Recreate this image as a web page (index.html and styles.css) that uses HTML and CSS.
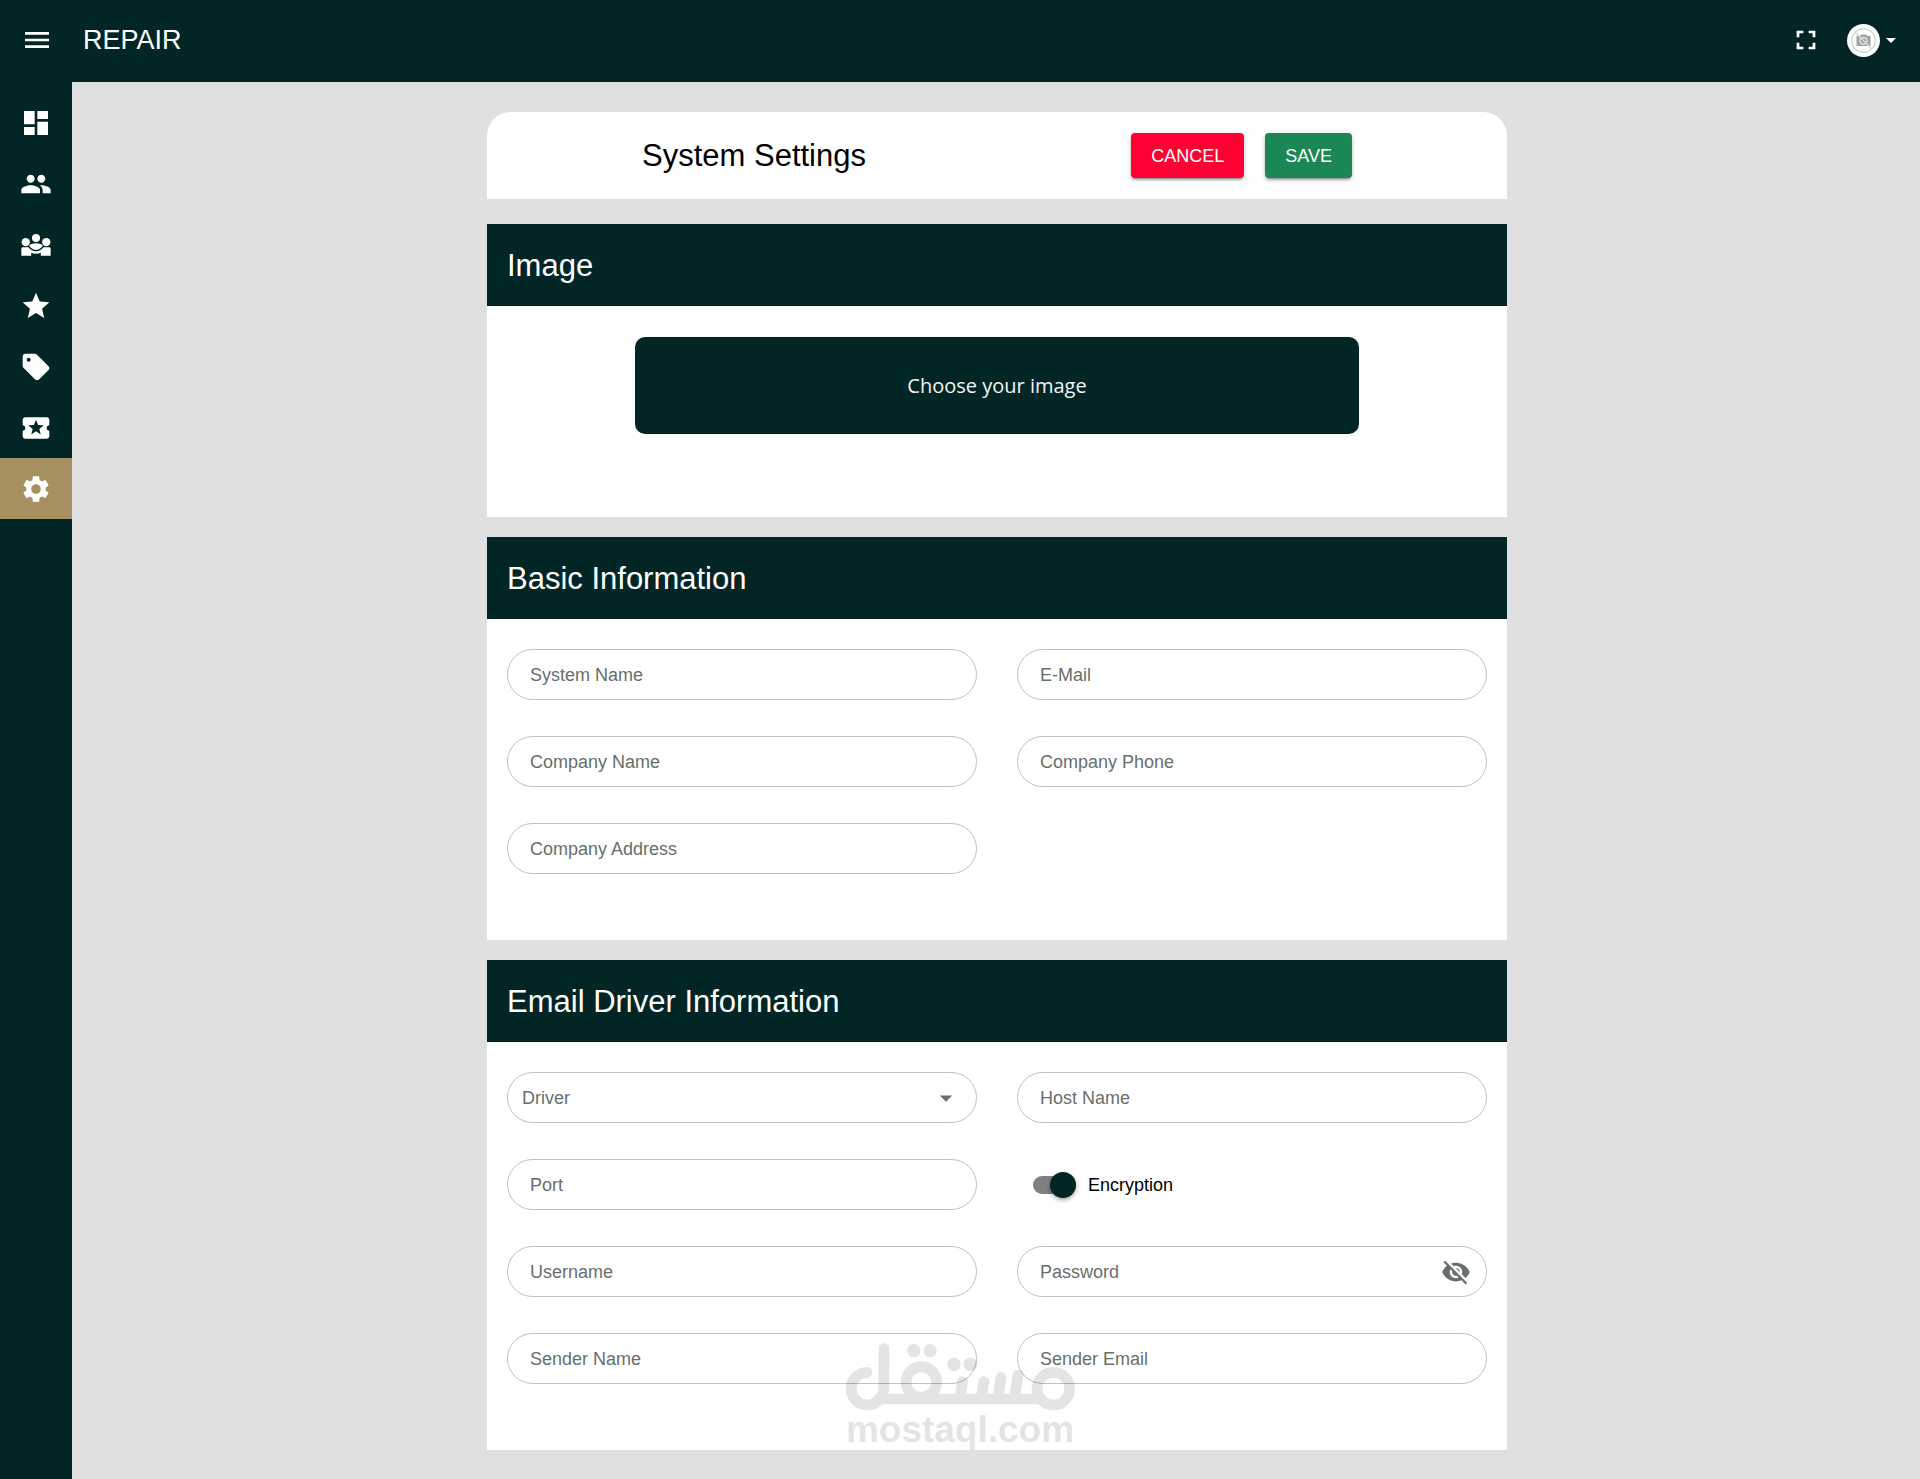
FILE: index.html
```html
<!DOCTYPE html>
<html lang="en">
<head>
<meta charset="utf-8">
<meta name="viewport" content="width=device-width, initial-scale=1">
<title>Repair - System Settings</title>
<link rel="stylesheet" href="styles.css">
</head>
<body>
<div class="app">
  <header class="topbar">
    <button class="icon-button" type="button" aria-label="Toggle menu">
      <svg class="icon" viewBox="0 0 24 24"><path d="M3 18h18v-2H3v2zm0-5h18v-2H3v2zm0-7v2h18V6H3z"/></svg>
    </button>
    <a class="brand" href="#">REPAIR</a>
    <button class="icon-button fullscreen" type="button" aria-label="Full screen">
      <svg class="icon" viewBox="0 0 24 24"><path d="M7 14H5v5h5v-2H7v-3zm-2-4h2V7h3V5H5v5zm12 7h-3v2h5v-5h-2v3zM14 5v2h3v3h2V5h-5z"/></svg>
    </button>
    <button class="account" type="button" aria-label="Account menu">
      <svg class="avatar" viewBox="0 0 33 33">
        <circle cx="16.500" cy="16.500" r="16.500" fill="#fff"/>
        <path d="M9.500 12h3.500l1.500-1.500h4.500L20.500 12h3v10h-14z" fill="#9da3a3"/>
        <circle cx="16.500" cy="16.800" r="3.400" fill="none" stroke="#dcdfdf" stroke-width="1.500"/>
        <circle cx="16.500" cy="16.500" r="11.800" fill="none" stroke="#d5d8d8" stroke-width="1.400"/>
        <path d="M8.500 8.500l16 16" stroke="#d5d8d8" stroke-width="1.600"/>
      </svg>
      <svg class="caret" viewBox="0 0 10 5"><path d="M0 0h10L5 5z"/></svg>
    </button>
  </header>

  <div class="layout">
    <nav class="sidebar" aria-label="Main">
      <a class="nav-item" href="#" aria-label="Dashboard"><svg class="icon" viewBox="0 0 24 24"><path d="M3 13h8V3H3v10zm0 8h8v-6H3v6zm10 0h8V11h-8v10zm0-18v6h8V3h-8z"/></svg></a>
      <a class="nav-item" href="#" aria-label="Users"><svg class="icon" viewBox="0 0 24 24"><path d="M16 11c1.660 0 2.990-1.340 2.990-3S17.660 5 16 5c-1.660 0-3 1.340-3 3s1.340 3 3 3zm-8 0c1.660 0 2.990-1.340 2.990-3S9.660 5 8 5C6.340 5 5 6.340 5 8s1.340 3 3 3zm0 2c-2.330 0-7 1.170-7 3.500V19h14v-2.500c0-2.330-4.670-3.500-7-3.500zm8 0c-.29 0-.62.02-.97.05 1.160.84 1.970 1.970 1.970 3.450V19h6v-2.500c0-2.330-4.670-3.500-7-3.500z"/></svg></a>
      <a class="nav-item" href="#" aria-label="Teams"><svg class="icon" viewBox="0 0 24 24"><circle cx="12" cy="6.800" r="3"/><circle cx="4.300" cy="9.900" r="3.100"/><circle cx="19.700" cy="9.900" r="3.100"/><path d="M6.800 12.200C8 11.100 10 10.600 12 10.600s4 .5 5.200 1.600c-.8 2-2.800 3.500-5.200 3.500s-4.400-1.500-5.200-3.500zM1 20v-5.200c0-.7.500-1.200 1.200-1.200h4.200c1 1.700 3.100 3 5.600 3s4.600-1.300 5.600-3h4.200c.7 0 1.200.5 1.200 1.200V20h-7.400v-2.100c-1.100.5-2.300.7-3.600.7s-2.500-.2-3.600-.7V20z"/></svg></a>
      <a class="nav-item" href="#" aria-label="Favourites"><svg class="icon" viewBox="0 0 24 24"><path d="M12 17.270L18.180 21l-1.640-7.030L22 9.240l-7.190-.61L12 2 9.190 8.630 2 9.240l5.460 4.730L5.820 21z"/></svg></a>
      <a class="nav-item" href="#" aria-label="Tags"><svg class="icon" viewBox="0 0 24 24"><path d="m21.410 11.410-8.830-8.830c-.37-.37-.88-.58-1.410-.58H4c-1.100 0-2 .9-2 2v7.170c0 .53.21 1.040.59 1.410l8.830 8.830c.78.78 2.050.78 2.830 0l7.170-7.170c.78-.78.78-2.040-.01-2.830zM6.500 8C5.670 8 5 7.330 5 6.500S5.670 5 6.500 5 8 5.670 8 6.500 7.330 8 6.500 8z"/></svg></a>
      <a class="nav-item" href="#" aria-label="Coupons"><svg class="icon" viewBox="0 0 24 24"><path d="M20 12c0-1.100.9-2 2-2V6c0-1.100-.9-2-2-2H4c-1.100 0-1.990.9-1.990 2v4c1.100 0 1.990.9 1.990 2s-.89 2-2 2v4c0 1.100.9 2 2 2h16c1.100 0 2-.9 2-2v-4c-1.100 0-2-.9-2-2zm-4.420 4.800L12 14.500l-3.580 2.300 1.080-4.120-3.290-2.690 4.240-.25L12 5.800l1.540 3.950 4.240.25-3.290 2.690 1.090 4.110z"/></svg></a>
      <a class="nav-item active" href="#" aria-label="Settings" aria-current="page"><svg class="icon" viewBox="0 0 24 24"><path d="M19.140 12.940c.04-.3.06-.61.06-.94 0-.32-.02-.64-.07-.94l2.030-1.580c.18-.14.23-.41.12-.61l-1.920-3.320c-.12-.22-.37-.29-.59-.22l-2.390.96c-.5-.38-1.030-.7-1.620-.94l-.36-2.540c-.04-.24-.24-.41-.48-.41h-3.840c-.24 0-.43.17-.47.41l-.36 2.540c-.59.24-1.130.57-1.620.94l-2.390-.96c-.22-.08-.47 0-.59.22L2.740 8.870c-.12.21-.08.47.12.61l2.030 1.580c-.05.3-.09.63-.09.94s.02.64.07.94l-2.030 1.580c-.18.14-.23.41-.12.61l1.920 3.320c.12.22.37.29.59.22l2.390-.96c.5.38 1.030.7 1.620.94l.36 2.540c.05.24.24.41.48.41h3.840c.24 0 .44-.17.47-.41l.36-2.540c.59-.24 1.130-.56 1.620-.94l2.390.96c.22.08.47 0 .59-.22l1.920-3.320c.12-.22.07-.47-.12-.61l-2.010-1.580zM12 15.600c-1.980 0-3.600-1.620-3.600-3.600s1.620-3.600 3.600-3.600 3.600 1.620 3.600 3.600-1.620 3.600-3.600 3.600z"/></svg></a>
    </nav>

    <main class="content">
      <form class="settings">
        <div class="title-card">
          <h1 class="title">System Settings</h1>
          <button class="btn btn-cancel" type="button">CANCEL</button>
          <button class="btn btn-save" type="submit">SAVE</button>
        </div>

        <section class="panel">
          <h2 class="panel-title">Image</h2>
          <div class="panel-body upload-body">
            <button class="upload" type="button">Choose your image</button>
          </div>
        </section>

        <section class="panel">
          <h2 class="panel-title">Basic Information</h2>
          <div class="panel-body fields">
            <div class="field"><input id="system-name" type="text"><label for="system-name">System Name</label></div>
            <div class="field"><input id="email" type="email"><label for="email">E-Mail</label></div>
            <div class="field"><input id="company-name" type="text"><label for="company-name">Company Name</label></div>
            <div class="field"><input id="company-phone" type="tel"><label for="company-phone">Company Phone</label></div>
            <div class="field"><input id="company-address" type="text"><label for="company-address">Company Address</label></div>
          </div>
        </section>

        <section class="panel">
          <h2 class="panel-title">Email Driver Information</h2>
          <div class="panel-body fields">
            <div class="field field-select">
              <select id="driver"><option value=""></option></select>
              <label for="driver">Driver</label>
              <svg class="field-icon" viewBox="0 0 24 24"><path d="M7 10l5 5 5-5z"/></svg>
            </div>
            <div class="field"><input id="host" type="text"><label for="host">Host Name</label></div>
            <div class="field"><input id="port" type="text"><label for="port">Port</label></div>
            <div class="switch-row">
              <input class="switch" id="encryption" type="checkbox" role="switch" checked>
              <label for="encryption">Encryption</label>
            </div>
            <div class="field"><input id="username" type="text"><label for="username">Username</label></div>
            <div class="field">
              <input id="password" type="password"><label for="password">Password</label>
              <button class="reveal" type="button" aria-label="Show password">
                <svg class="eye" viewBox="0 0 24 24"><path d="M12 7c2.760 0 5 2.240 5 5 0 .65-.13 1.260-.36 1.830l2.920 2.920c1.510-1.260 2.700-2.890 3.430-4.750-1.730-4.390-6-7.500-11-7.500-1.400 0-2.740.25-3.980.7l2.160 2.160C10.740 7.130 11.350 7 12 7zM2 4.270l2.280 2.280.46.46C3.080 8.300 1.780 10.020 1 12c1.730 4.390 6 7.500 11 7.500 1.550 0 3.030-.3 4.380-.84l.42.42L19.730 22 21 20.730 3.270 3 2 4.270zM7.530 9.800l1.550 1.550c-.05.21-.08.43-.08.65 0 1.660 1.340 3 3 3 .22 0 .44-.03.65-.08l1.550 1.550c-.67.33-1.410.53-2.200.53-2.760 0-5-2.240-5-5 0-.79.2-1.530.53-2.200zm4.310-.78l3.150 3.150.02-.16c0-1.660-1.340-3-3-3l-.17.01z"/></svg>
              </button>
            </div>
            <div class="field"><input id="sender-name" type="text"><label for="sender-name">Sender Name</label></div>
            <div class="field"><input id="sender-email" type="email"><label for="sender-email">Sender Email</label></div>
          </div>
        </section>
      </form>
    </main>
  </div>

  <div class="watermark">
    <svg class="watermark-logo" viewBox="75 95 690 207" role="img" aria-label="مستقل">
      <g fill="none" stroke="#000" stroke-width="32" stroke-linecap="round">
        <circle cx="700" cy="235" r="49"/>
        <circle cx="304" cy="215" r="46"/>
        <path d="M141 186A49 49 0 1 0 191 240L192 115M175 266H665M428 214l-7 46M492 214l-8 46M543 201l-9 60M594 194l-10 66"/>
      </g>
      <circle cx="281" cy="121" r="20"/><circle cx="330" cy="121" r="20"/><circle cx="402" cy="162" r="20"/><circle cx="451" cy="162" r="20"/>
    </svg>
    <span>mostaql.com</span>
  </div>
</div>
</body>
</html>
```
FILE: styles.css
```css
:root {
  --dark: #022626;
  --accent: #a69062;
  --page: #e0e0e0;
  --line: #c0c0c0;
  --muted: #666f6c;
}

* { box-sizing: border-box; }

body {
  margin: 0;
  background: var(--page);
  color: #000;
  font: 18px/24px "Liberation Sans", Arial, sans-serif;
}

button, input, select { font: inherit; }

button {
  border: 0;
  padding: 0;
  background: none;
  color: inherit;
  cursor: pointer;
}

.app {
  position: relative;
  display: flex;
  flex-direction: column;
  min-height: 100vh;
}

.topbar {
  display: flex;
  align-items: center;
  height: 82px;
  padding: 0 24px 2px 21px;
  background: var(--dark);
  color: #fff;
}

.icon {
  display: block;
  width: 32px;
  height: 32px;
  fill: currentColor;
}

.brand {
  margin-left: 30px;
  color: #fff;
  font-size: 27px;
  line-height: 32px;
  text-decoration: none;
}

.fullscreen { margin-left: auto; }

.account {
  display: flex;
  align-items: center;
  gap: 6px;
  margin-left: 25px;
}

.avatar { width: 33px; height: 33px; }

.caret {
  width: 10px;
  height: 5px;
  fill: #fff;
}

.layout {
  display: flex;
  flex: 1;
}

.sidebar {
  flex: none;
  width: 72px;
  padding-top: 10px;
  background: var(--dark);
}

.nav-item {
  display: flex;
  align-items: center;
  justify-content: center;
  height: 61px;
  color: #fff;
}

.nav-item.active { background: var(--accent); }

.content {
  flex: 1;
  min-width: 0;
  padding: 30px 24px 24px 26px;
}

.settings {
  display: flex;
  flex-direction: column;
  gap: 20px;
  max-width: 1020px;
  margin: 0 auto;
}

.title-card {
  display: flex;
  align-items: center;
  gap: 21px;
  margin-bottom: 5px;
  padding: 21px 155px;
  border-radius: 24px 24px 0 0;
  background: #fff;
}

.title {
  margin: 0 auto 0 0;
  font-size: 31px;
  font-weight: 400;
  line-height: 40px;
}

.btn {
  height: 45px;
  padding: 0 20px;
  border-radius: 4px;
  color: #fff;
  box-shadow: 0 3px 2px -2px rgba(0, 0, 0, .3), 0 2px 3px rgba(0, 0, 0, .2), 0 1px 6px rgba(0, 0, 0, .12);
}

.btn-cancel { background: #ff0033; }
.btn-save { background: #1b8755; }

.panel { background: #fff; }

.panel-title {
  margin: 0;
  padding: 22px 20px 20px;
  background: var(--dark);
  color: #fff;
  font-size: 31px;
  font-weight: 400;
  line-height: 40px;
}

.panel-body { padding: 30px 20px 66px; }

.upload-body { padding: 31px 148px 83px; }

.upload {
  display: block;
  width: 100%;
  height: 97px;
  border-radius: 10px;
  background: var(--dark);
  color: #f4f4f4;
  font-family: "Open Sans", "Noto Sans", sans-serif;
  font-size: 20px;
}

.fields {
  display: grid;
  grid-template-columns: 1fr 1fr;
  gap: 36px 40px;
}

.field {
  display: grid;
  align-items: center;
  height: 51px;
}

.field > * { grid-area: 1 / 1; }

.field input,
.field select {
  width: 100%;
  height: 51px;
  padding: 0 24px;
  border: 1px solid var(--line);
  border-radius: 26px;
  background: #fff;
  appearance: none;
}

.field label {
  padding-left: 23px;
  color: var(--muted);
  pointer-events: none;
}

.field-select label { padding-left: 15px; }

.field-icon,
.reveal {
  justify-self: end;
  width: 30px;
  height: 30px;
  margin-right: 16px;
}

.field-icon {
  fill: var(--muted);
  pointer-events: none;
}

.eye {
  display: block;
  fill: var(--muted);
}

.switch-row {
  display: flex;
  align-items: center;
  gap: 12px;
  padding-left: 16px;
}

.switch {
  display: flex;
  align-items: center;
  justify-content: flex-start;
  width: 43px;
  height: 18px;
  margin: 0;
  border-radius: 9px;
  background: #7c8080;
  appearance: none;
}

.switch::before {
  flex: none;
  width: 26px;
  height: 26px;
  border-radius: 50%;
  background: var(--dark);
  box-shadow: 0 2px 4px rgba(0, 0, 0, .35);
  content: "";
}

.switch:checked { justify-content: flex-end; }

.watermark {
  position: absolute;
  bottom: 30px;
  left: 50%;
  display: flex;
  flex-direction: column;
  align-items: center;
  width: 230px;
  transform: translateX(-50%);
  opacity: .1;
  font-size: 37px;
  font-weight: 700;
  line-height: 38px;
  pointer-events: none;
}

.watermark-logo { width: 230px; }
```
